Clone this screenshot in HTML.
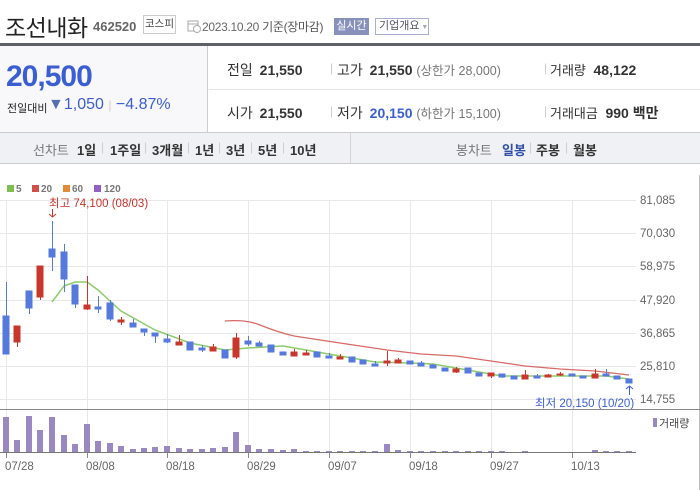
<!DOCTYPE html>
<html><head><meta charset="utf-8"><style>
*{margin:0;padding:0;box-sizing:border-box}
body{width:700px;height:490px;background:#fff;font-family:"Liberation Sans","Noto Sans CJK KR",sans-serif;position:relative;overflow:hidden;color:#333}
.a{position:absolute;white-space:nowrap}
.b{font-weight:bold}
.t{position:absolute;top:140px;font-size:13px;font-weight:bold;color:#333;white-space:nowrap}
.s{position:absolute;top:140px;font-size:12px;color:#ccc}
</style></head><body>
<div class="a" style="left:5px;top:9px;font-size:23px;color:#222;letter-spacing:-0.5px">조선내화</div>
<div class="a b" style="left:93px;top:19px;font-size:13px;color:#666;">462520</div>
<div class="a" style="left:143px;top:15px;width:33px;height:19px;border:1px solid #ccc;font-size:10.5px;line-height:17px;text-align:center;color:#444">코스피</div>
<svg class="a" style="left:187px;top:19px" width="14" height="14"><rect x="1" y="2" width="10" height="10" fill="none" stroke="#aaa"/><line x1="1" y1="5" x2="11" y2="5" stroke="#aaa"/><circle cx="10" cy="10" r="3.5" fill="#fff" stroke="#aaa"/></svg>
<div class="a" style="left:202px;top:18px;font-size:12px;color:#555;letter-spacing:-0.3px"><span style="color:#666">2023.10.20</span> 기준(장마감)</div>
<div class="a" style="left:334px;top:18px;width:35px;height:17px;background:#8891bb;color:#fff;font-size:11px;line-height:17px;text-align:center">실시간</div>
<div class="a" style="left:375px;top:18px;width:54px;height:17px;border:1px solid #a8aed0;color:#556;font-size:11px;line-height:15px;padding-left:3px">기업개요<span style="color:#aab;font-size:7px"> ▼</span></div>
<div class="a" style="left:0;top:43px;width:700px;height:3px;background:#5e6168"></div>
<div class="a" style="left:0;top:46px;width:208px;height:86px;background:#f8f8fa;border-right:1px solid #ccc"></div>
<div class="a b" style="left:6px;top:60px;font-size:30px;color:#3b5fd3;letter-spacing:-1px">20,500</div>
<div class="a" style="left:7px;top:100px;font-size:11px;color:#222">전일대비</div>
<div class="a" style="left:48px;top:96px;font-size:16px;color:#3b5fd3"><span style="color:#5570b0">▼</span>1,050 <span style="color:#ccc;font-size:12px">|</span> −4.87%</div>
<div class="a" style="left:209px;top:89px;width:491px;height:1px;background:#e5e5e5"></div>
<div class="a" style="left:227px;top:60px;font-size:14px;color:#333">전일 <b style="margin-left:3px">21,550</b></div>
<div class="a" style="left:227px;top:103px;font-size:14px;color:#333">시가 <b style="margin-left:3px">21,550</b></div>
<div class="a" style="left:330px;top:61px;font-size:12px;color:#ccc">|</div>
<div class="a" style="left:330px;top:104px;font-size:12px;color:#ccc">|</div>
<div class="a" style="left:337px;top:60px;font-size:14px;color:#333">고가 <b style="margin-left:3px">21,550</b> <span style="color:#777;font-size:12.5px">(상한가 28,000)</span></div>
<div class="a" style="left:337px;top:103px;font-size:14px;color:#333">저가 <b style="margin-left:3px;color:#3b5fd3">20,150</b> <span style="color:#777;font-size:12.5px">(하한가 15,100)</span></div>
<div class="a" style="left:544px;top:61px;font-size:12px;color:#ccc">|</div>
<div class="a" style="left:544px;top:104px;font-size:12px;color:#ccc">|</div>
<div class="a" style="left:550px;top:60px;font-size:13px;color:#333">거래량 <b style="margin-left:4px;font-size:14px">48,122</b></div>
<div class="a" style="left:550px;top:103px;font-size:13px;color:#333">거래대금 <b style="margin-left:4px;font-size:14px">990 백만</b></div>
<div class="a" style="left:0;top:132px;width:700px;height:32px;background:#f0f1f5;border-top:1px solid #ccc;border-bottom:1px solid #ccc"></div>
<div class="a" style="left:350px;top:133px;width:1px;height:30px;background:#d4d4d8"></div>
<div class="t" style="left:33px;font-weight:normal;color:#777">선차트</div>
<div class="t" style="left:77px">1일</div><div class="s" style="left:101px">|</div>
<div class="t" style="left:110px">1주일</div><div class="s" style="left:144px">|</div>
<div class="t" style="left:152px">3개월</div><div class="s" style="left:187px">|</div>
<div class="t" style="left:195px">1년</div><div class="s" style="left:218px">|</div>
<div class="t" style="left:226px">3년</div><div class="s" style="left:250px">|</div>
<div class="t" style="left:258px">5년</div><div class="s" style="left:282px">|</div>
<div class="t" style="left:290px">10년</div>
<div class="t" style="left:456px;font-weight:normal;color:#777">봉차트</div>
<div class="t" style="left:502px;color:#2f4fa8">일봉</div><div class="s" style="left:529px">|</div>
<div class="t" style="left:536px">주봉</div><div class="s" style="left:565px">|</div>
<div class="t" style="left:573px">월봉</div>

<svg class="a" style="left:0;top:175px" width="700" height="315" viewBox="0 175 700 315" font-family="Liberation Sans,Noto Sans CJK KR,sans-serif">
<line x1="699.5" y1="175" x2="699.5" y2="490" stroke="#bbb"/>
<g stroke="#e8e8e8" stroke-width="1">
<line x1="0" y1="200.5" x2="636" y2="200.5"/><line x1="0" y1="233.5" x2="636" y2="233.5"/><line x1="0" y1="266.5" x2="636" y2="266.5"/><line x1="0" y1="300.5" x2="636" y2="300.5"/><line x1="0" y1="333.5" x2="636" y2="333.5"/><line x1="0" y1="366.5" x2="636" y2="366.5"/><line x1="0" y1="399.5" x2="636" y2="399.5"/>
<path d="M6.5 200V409M87.5 200V409M167.5 200V409M248.5 200V409M329.5 200V409M410.5 200V409M491.5 200V409M572.5 200V409"/>
<path d="M6.5 410V452M87.5 410V452M167.5 410V452M248.5 410V452M329.5 410V452M410.5 410V452M491.5 410V452M572.5 410V452"/>
</g>
<g font-size="10" font-weight="bold" fill="#777">
<rect x="7" y="185" width="7" height="7" fill="#7cbf4e"/><text x="16" y="192">5</text>
<rect x="32" y="185" width="7" height="7" fill="#d2504a"/><text x="41" y="192">20</text>
<rect x="63" y="185" width="7" height="7" fill="#e08a3a"/><text x="72" y="192">60</text>
<rect x="94" y="185" width="7" height="7" fill="#9460c8"/><text x="104" y="192">120</text>
</g>
<g font-size="11.5" fill="#666">
<text x="640" y="204">81,085</text><text x="640" y="237">70,030</text><text x="640" y="270">58,975</text><text x="640" y="304">47,920</text><text x="640" y="337">36,865</text><text x="640" y="370">25,810</text><text x="640" y="403">14,755</text>
</g>
<text x="49" y="207" font-size="11.5" fill="#c8332a">최고 74,100 (08/03)</text>
<path d="M52.5 209V217M49 214L52.5 217L56 214" stroke="#c8332a" fill="none"/>
<text x="535" y="407" font-size="11.5" fill="#3b5fd3">최저 20,150 (10/20)</text>
<path d="M629.5 386V395M626 389L629.5 386L633 389" stroke="#3b5fd3" fill="none"/>
<path d="M225 321 C240 320,250 321,260 325 S285 334,294 336 L340 343 L387 350 L421 354 L456 356 L491 361 L525 366 L560 369 L595 371 L629 375" stroke="#d76a66" stroke-width="1.3" fill="none"/>
<path d="M52 302 L64 286 L75 282 L87 282 L98 290 L110 301 L121 311 L155 330 L190 343 L225 350 L248 348 L283 346 L306 350 L340 356 L352 358 L375 362 L410 363 L433 364 L456 368 L479 372 L502 376 L525 376 L548 376 L583 376 L606 376 L629 379" stroke="#8ccd6a" stroke-width="1.5" fill="none"/>
<g stroke-width="1">
<g fill="#5579dc" stroke="#5579dc">
<line x1="6.5" y1="282" x2="6.5" y2="354"/><rect x="3" y="316" width="6" height="38"/>
<line x1="29.5" y1="291" x2="29.5" y2="314"/><rect x="26" y="291" width="6" height="17"/>
<line x1="52.5" y1="221" x2="52.5" y2="271"/><rect x="49" y="249" width="6" height="8"/>
<line x1="64.5" y1="244" x2="64.5" y2="292"/><rect x="61" y="252" width="6" height="27"/>
<line x1="75.5" y1="285" x2="75.5" y2="308"/><rect x="72" y="285" width="6" height="19"/>
<line x1="98.5" y1="296" x2="98.5" y2="313"/><rect x="95" y="307" width="6" height="2"/>
<line x1="110.5" y1="300" x2="110.5" y2="321"/><rect x="107" y="303" width="6" height="16"/>
<line x1="133.5" y1="319" x2="133.5" y2="327"/><rect x="130" y="323" width="6" height="4"/>
<line x1="144.5" y1="329" x2="144.5" y2="336"/><rect x="141" y="329" width="6" height="3"/>
<line x1="155.5" y1="333" x2="155.5" y2="343"/><rect x="152" y="333" width="6" height="3"/>
<line x1="167.5" y1="334" x2="167.5" y2="343"/><rect x="164" y="339" width="6" height="3"/>
<rect x="187" y="342" width="6" height="8"/>
<line x1="202.5" y1="345" x2="202.5" y2="352"/><rect x="199" y="348" width="6" height="2"/>
<rect x="222" y="350" width="6" height="8"/>
<line x1="248.5" y1="336" x2="248.5" y2="346"/><rect x="245" y="341" width="6" height="3"/>
<line x1="259.5" y1="341" x2="259.5" y2="346"/><rect x="256" y="343" width="6" height="3"/>
<rect x="268" y="345" width="6" height="7"/>
<rect x="280" y="352" width="6" height="3"/>
<rect x="314" y="352" width="6" height="5"/>
<line x1="329.5" y1="353" x2="329.5" y2="358"/><rect x="326" y="356" width="6" height="2"/>
<rect x="349" y="357" width="6" height="5"/>
<rect x="360" y="360" width="6" height="4"/>
<line x1="375.5" y1="361" x2="375.5" y2="366"/><rect x="372" y="364" width="6" height="2"/>
<rect x="407" y="361" width="6" height="3"/>
<line x1="421.5" y1="361" x2="421.5" y2="366"/><rect x="418" y="363" width="6" height="3"/>
<line x1="433.5" y1="364" x2="433.5" y2="368"/><rect x="430" y="365" width="6" height="3"/>
<rect x="442" y="368" width="6" height="3"/>
<rect x="465" y="368" width="6" height="5"/>
<rect x="476" y="373" width="6" height="3"/>
<line x1="502.5" y1="374" x2="502.5" y2="378"/><rect x="499" y="374" width="6" height="3"/>
<rect x="511" y="376" width="6" height="3"/>
<line x1="537.5" y1="374" x2="537.5" y2="378"/><rect x="534" y="376" width="6" height="2"/>
<rect x="569" y="374" width="6" height="2"/>
<rect x="580" y="376" width="6" height="2"/>
<line x1="606.5" y1="369" x2="606.5" y2="376"/><rect x="603" y="374" width="6" height="2"/>
<rect x="614" y="376" width="6" height="3"/>
<rect x="626" y="379" width="6" height="4"/>
</g>
<g fill="#c9372c" stroke="#c9372c">
<line x1="17.5" y1="326" x2="17.5" y2="347"/><rect x="14" y="326" width="6" height="16"/>
<line x1="40.5" y1="266" x2="40.5" y2="300"/><rect x="37" y="266" width="6" height="31"/>
<line x1="87.5" y1="276" x2="87.5" y2="310"/><rect x="84" y="305" width="6" height="4"/>
<line x1="121.5" y1="317" x2="121.5" y2="325"/><rect x="118" y="320" width="6" height="2"/>
<line x1="179.5" y1="335" x2="179.5" y2="345"/><rect x="176" y="342" width="6" height="3"/>
<line x1="213.5" y1="344" x2="213.5" y2="351"/><rect x="210" y="347" width="6" height="4"/>
<line x1="236.5" y1="333" x2="236.5" y2="359"/><rect x="233" y="338" width="6" height="19"/>
<line x1="294.5" y1="349" x2="294.5" y2="356"/><rect x="291" y="352" width="6" height="4"/>
<line x1="306.5" y1="350" x2="306.5" y2="355"/><rect x="303" y="353" width="6" height="2"/>
<line x1="340.5" y1="354" x2="340.5" y2="359"/><rect x="337" y="357" width="6" height="2"/>
<line x1="387.5" y1="351" x2="387.5" y2="366"/><rect x="384" y="361" width="6" height="2"/>
<line x1="398.5" y1="358" x2="398.5" y2="363"/><rect x="395" y="360" width="6" height="3"/>
<line x1="456.5" y1="367" x2="456.5" y2="373"/><rect x="453" y="369" width="6" height="3"/>
<line x1="491.5" y1="373" x2="491.5" y2="378"/><rect x="488" y="373" width="6" height="3"/>
<line x1="525.5" y1="370" x2="525.5" y2="379"/><rect x="522" y="375" width="6" height="4"/>
<line x1="548.5" y1="374" x2="548.5" y2="377"/><rect x="545" y="375" width="6" height="2"/>
<line x1="560.5" y1="372" x2="560.5" y2="376"/><rect x="557" y="374" width="6" height="1"/>
<line x1="595.5" y1="369" x2="595.5" y2="378"/><rect x="592" y="374" width="6" height="4"/>
</g>
</g>
<line x1="0" y1="409.5" x2="700" y2="409.5" stroke="#888"/>
<line x1="0" y1="452.5" x2="636" y2="452.5" stroke="#777"/>
<g fill="#9a88c0">
<rect x="3" y="417" width="6" height="35"/><rect x="14" y="440" width="6" height="12"/><rect x="26" y="416" width="6" height="36"/><rect x="37" y="430" width="6" height="22"/><rect x="49" y="417" width="6" height="35"/><rect x="61" y="435" width="6" height="17"/><rect x="72" y="444" width="6" height="8"/><rect x="84" y="424" width="6" height="28"/><rect x="95" y="441" width="6" height="11"/><rect x="107" y="443" width="6" height="9"/><rect x="118" y="446" width="6" height="6"/><rect x="130" y="449" width="6" height="3"/><rect x="141" y="448" width="6" height="4"/><rect x="152" y="447" width="6" height="5"/><rect x="164" y="446" width="6" height="6"/><rect x="176" y="448" width="6" height="4"/><rect x="187" y="449" width="6" height="3"/><rect x="199" y="449" width="6" height="3"/><rect x="210" y="448" width="6" height="4"/><rect x="222" y="447" width="6" height="5"/><rect x="233" y="432" width="6" height="20"/><rect x="245" y="445" width="6" height="7"/><rect x="256" y="449" width="6" height="3"/><rect x="268" y="449" width="6" height="3"/><rect x="280" y="450" width="6" height="2"/><rect x="291" y="449" width="6" height="3"/>
<rect x="303" y="451" width="6" height="1"/><rect x="314" y="451" width="6" height="1"/><rect x="326" y="451" width="6" height="1"/><rect x="337" y="451" width="6" height="1"/><rect x="349" y="451" width="6" height="1"/><rect x="360" y="451" width="6" height="1"/><rect x="372" y="451" width="6" height="1"/><rect x="384" y="444" width="6" height="8"/><rect x="395" y="450" width="6" height="2"/><rect x="407" y="451" width="6" height="1"/><rect x="418" y="451" width="6" height="1"/><rect x="430" y="451" width="6" height="1"/><rect x="442" y="451" width="6" height="1"/><rect x="453" y="451" width="6" height="1"/><rect x="465" y="451" width="6" height="1"/><rect x="476" y="451" width="6" height="1"/><rect x="488" y="451" width="6" height="1"/><rect x="499" y="451" width="6" height="1"/><rect x="522" y="451" width="6" height="1"/><rect x="592" y="450" width="6" height="2"/><rect x="603" y="451" width="6" height="1"/><rect x="614" y="451" width="6" height="1"/><rect x="626" y="451" width="6" height="1"/>
<rect x="653" y="418" width="4" height="9"/>
</g>
<text x="659" y="427" font-size="11" fill="#444">거래량</text>
<g stroke="#888"><path d="M6.5 453V458M87.5 453V458M167.5 453V458M248.5 453V458M329.5 453V458M410.5 453V458M491.5 453V458M572.5 453V458"/></g>
<g font-size="11.5" fill="#666">
<text x="5" y="470">07/28</text><text x="86" y="470">08/08</text><text x="166" y="470">08/18</text><text x="247" y="470">08/29</text><text x="328" y="470">09/07</text><text x="409" y="470">09/18</text><text x="490" y="470">09/27</text><text x="571" y="470">10/13</text>
</g>
</svg>
</body></html>
